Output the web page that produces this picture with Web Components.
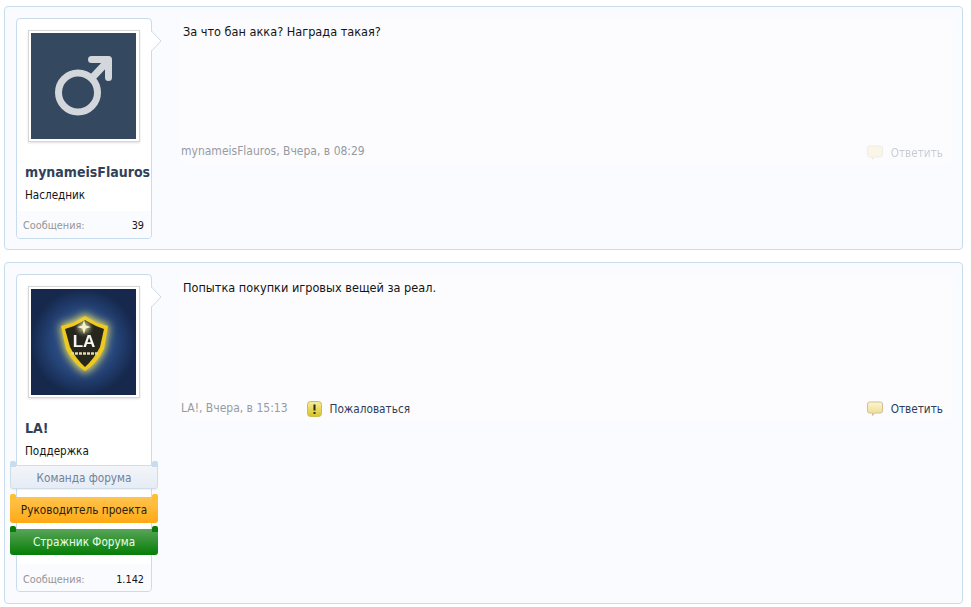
<!DOCTYPE html>
<html lang="ru"><head><meta charset="utf-8">
<style>
html,body{margin:0;background:#fff}
body{padding:6px 8px 0 4px;font:12px/16px "DejaVu Sans Condensed","DejaVu Sans",sans-serif;font-stretch:condensed;color:#141414;width:959px}
</style></head><body>
<template id="post-tpl"><style>
:host{display:flex;box-sizing:border-box;width:959px;border:1px solid #c8dcee;border-radius:4px;background:#fafbfe;padding:11px;margin-bottom:12px;gap:28px}
.main{flex:1;display:flex;flex-direction:column;height:147px;background:#fcfcff;border-radius:0 0 6px 6px}
.msg{flex:1;padding:0 0 0 3px;font-size:12.6px;margin-top:6px}
.foot{display:flex;align-items:center;font-size:12px;height:22px;margin-bottom:2px;padding-left:1px}
</style><slot name="user"></slot><div class="main"><div class="msg"><slot name="msg"></slot></div><div class="foot"><slot name="foot"></slot></div></div></template>
<script>
class ForumPost extends HTMLElement{constructor(){super();this.attachShadow({mode:"open"}).append(document.getElementById("post-tpl").content.cloneNode(true))}}
customElements.define("forum-post",ForumPost);
class UserCard extends HTMLElement{constructor(){super();const a=this.attachShadow({mode:"open"});a.innerHTML=`<style>
:host{display:flex;flex-direction:column;box-sizing:border-box;width:136px;flex:none;position:relative;border:1px solid #c8dcee;border-radius:4px;background:#fff;}
.arrow{position:absolute;left:134px;top:11px}
.frame{box-sizing:border-box;width:112px;height:112px;margin:11px 0 0 11px;background:#fff;border:1px solid #d7d7d7;padding:2px;box-shadow:0 1px 2px rgba(0,0,0,.12)}
.name{font-weight:bold;font-size:14px;line-height:18px;color:#2f4259;margin:21px 0 0 8px;white-space:nowrap}
.title{margin:6px 0 0 8px;line-height:16px;font-size:11.6px}
.stats{display:flex;justify-content:space-between;box-sizing:border-box;height:27px;background:#fafbfe;padding:var(--stats-top,7px) 7px 0 6px;font-size:10.8px;line-height:16px;border-radius:0 0 4px 4px;margin-top:auto}
.stats span:first-child{color:#969696}
</style><svg class="arrow" width="11" height="22" viewBox="0 0 11 22"><path d="M0 1L10 11L0 21Z" fill="#fff"/><path d="M.5 1L10 11L.5 21" fill="none" stroke="#c8dcee"/></svg><div class="frame"><slot name="avatar"></slot></div><div class="name"><slot name="name"></slot></div><div class="title"><slot name="title"></slot></div><slot name="banners"></slot><div class="stats"><span>Сообщения:</span><span><slot name="count"></slot></span></div>`}}
customElements.define("user-card",UserCard);
class UserBanner extends HTMLElement{constructor(){super();const a=this.attachShadow({mode:"open"});a.innerHTML=`<style>
:host{display:block;box-sizing:border-box;width:148px;margin:0 0 0 -7px;position:relative;text-align:center;font-size:11.7px;border-radius:3px;white-space:nowrap}
:host::before,:host::after{content:"";position:absolute;top:var(--tip-top,-3px);width:6px;height:6px;background:var(--tip);border-radius:2px 2px 0 0}
:host::before{left:var(--inset,0)}:host::after{right:var(--inset,0)}
span{position:relative}
</style><span><slot></slot></span>`}}
customElements.define("user-banner",UserBanner);
class PostLink extends HTMLElement{constructor(){super();const a=this.attachShadow({mode:"open"});a.innerHTML=`<style>
:host{display:inline-flex;align-items:center;gap:8px;color:#2c3e55;font-size:11.7px;margin-top:2px}
</style><slot name="icon"></slot><slot></slot>`}}
customElements.define("post-link",PostLink);
</script>
<forum-post style="padding-bottom:10px">
 <user-card slot="user" style="height:221px">
  <svg slot="avatar" width="105" height="106" viewBox="0 0 105 106" style="display:block"><rect width="105" height="106" fill="#344860"/><circle cx="47" cy="59.500" r="19.500" fill="none" stroke="#d3d7dc" stroke-width="7"/><path d="M60 46L76 29" stroke="#d3d7dc" stroke-width="7" fill="none"/><path d="M60.500 26.500H77.500V44.500" stroke="#d3d7dc" stroke-width="7" stroke-linejoin="round" stroke-linecap="round" fill="none"/></svg>
  <span slot="name">mynameisFlauros</span><span slot="title">Наследник</span><span slot="count">39</span>
 </user-card>
 <span slot="msg">За что бан акка? Награда такая?</span>
 <span slot="foot" style="display:flex;width:100%;justify-content:space-between"><span style="color:#969aa2">mynameisFlauros, Вчера, в 08:29</span>
 <post-link style="opacity:.25;margin-right:8px"><svg slot="icon" width="16" height="16" viewBox="0 0 16 16"><path d="M2.500 1H13.500Q15.500 1 15.500 3V10Q15.500 12 13.500 12H8L5.500 14.500V12H2.500Q.5 12 .5 10V3Q.5 1 2.500 1Z" fill="#f4e6a6" stroke="#cfc09a"/></svg>Ответить</post-link></span>
</forum-post>
<forum-post>
 <user-card slot="user" style="height:318px;--stats-top:8px">
  <svg slot="avatar" width="105" height="106" viewBox="0 0 105 106" style="display:block"><defs><radialGradient id="bg"><stop offset="0" stop-color="#2f5794"/><stop offset=".6" stop-color="#26467c"/><stop offset="1" stop-color="#16294d"/></radialGradient><filter id="gl" x="-30%" y="-30%" width="160%" height="160%"><feGaussianBlur stdDeviation="4"/></filter><filter id="sf"><feGaussianBlur stdDeviation=".6"/></filter><filter id="st" x="-100%" y="-100%" width="300%" height="300%"><feGaussianBlur stdDeviation="2.500"/></filter></defs><rect width="105" height="106" fill="url(#bg)"/><path d="M54 25L66 32L78 36L74 60Q67 76 54 84Q41 76 34 60L29 36L42 32Z" fill="#fbee60" filter="url(#gl)"/><g filter="url(#sf)"><path d="M54 27L66 34L77 37L73 60Q66 74 54 82Q42 74 35 60L30 37L42 34Z" fill="#efca1e"/><path d="M54 31L65 37L73 40L69 58Q63 70 54 78Q45 70 39 58L34 40L43 37Z" fill="#25261e"/><circle cx="53" cy="38" r="6" fill="#f3eeb0" opacity=".75" filter="url(#st)"/><path d="M53 31L54.800 36.500L60 38L54.800 39.500L53 45L51.200 39.500L46 38L51.200 36.500Z" fill="#f7f3c8"/><text x="53" y="58" text-anchor="middle" font-family="Liberation Sans" font-weight="bold" font-size="17" fill="#f6f6f2">LA</text><path d="M40 64.500H67" stroke="#e0dba8" stroke-width="2.500" stroke-dasharray="3 1"/></g></svg>
  <span slot="name">LA!</span><span slot="title">Поддержка</span>
  <div slot="banners" style="margin-top:6px;display:flex;flex-direction:column">
  <user-banner style="--tip:#c8dcee;--tip-top:-5px;--inset:-1px;background:linear-gradient(#f2f5f9,#e6ecf5);color:#6f819b;border:1px solid #cfdcea;height:24px;line-height:24px;box-shadow:0 1px 1px rgba(0,0,0,.06)">Команда форума</user-banner>
  <user-banner style="--tip:#ffbf2e;background:linear-gradient(#ffc44f,#ffa914);color:#2a2110;height:26px;line-height:26px;margin-top:8px">Руководитель проекта</user-banner>
  <user-banner style="--tip:#0a7c0a;background:linear-gradient(#58a558,#057d05);color:#e9ffe9;height:26px;line-height:26px;margin-top:6px">Стражник Форума</user-banner></div>
  <span slot="count">1.142</span>
 </user-card>
 <span slot="msg">Попытка покупки игровых вещей за реал.</span>
 <span slot="foot" style="display:flex;width:100%;align-items:center"><span style="color:#969aa2;margin-right:19px">LA!, Вчера, в 15:13</span>
 <post-link style="flex:1"><svg slot="icon" width="15" height="16" viewBox="0 0 15 16"><defs><linearGradient id="y" x2="0" y2="1"><stop offset="0" stop-color="#f5ee9c"/><stop offset="1" stop-color="#d9c222"/></linearGradient></defs><rect x=".5" y=".5" width="14" height="15" rx="3" fill="url(#y)" stroke="#cdbb55"/><rect x="6.500" y="3.500" width="2" height="6" fill="#2a2a10"/><rect x="6.500" y="11" width="2" height="2" fill="#2a2a10"/></svg>Пожаловаться</post-link>
 <post-link style="margin-right:8px"><svg slot="icon" width="16" height="16" viewBox="0 0 16 16"><defs><linearGradient id="c" x2="0" y2="1"><stop offset="0" stop-color="#fbf6d0"/><stop offset="1" stop-color="#eed98a"/></linearGradient></defs><path d="M2.500 1H13.500Q15.500 1 15.500 3V10Q15.500 12 13.500 12H8L5.500 14.500V12H2.500Q.5 12 .5 10V3Q.5 1 2.500 1Z" fill="url(#c)" stroke="#cfc09a"/></svg>Ответить</post-link></span>
</forum-post>
</body></html>
